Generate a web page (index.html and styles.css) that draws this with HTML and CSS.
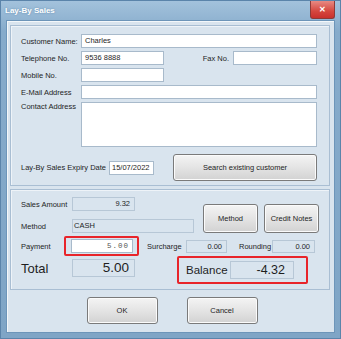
FILE: index.html
```html
<!DOCTYPE html>
<html lang="en">
<head>
    <meta charset="UTF-8">
    <title>Lay-By Sales</title>
    <link rel="stylesheet" href="styles.css">
</head>
<body>
    <div class="window">
        <div class="titlebar">
            <span class="title">Lay-By Sales</span>
            <span class="close">&#x2715;</span>
        </div>
        <div class="client">
            <div class="group customer">
                <div class="row">
                    <label>Customer Name:</label>
                    <div class="input w-full">Charles</div>
                </div>
                <div class="row">
                    <label>Telephone No.</label>
                    <div class="input w-short">9536 8888</div>
                    <label class="fax">Fax No.</label>
                    <div class="input w-fax"></div>
                </div>
                <div class="row">
                    <label>Mobile No.</label>
                    <div class="input w-short"></div>
                </div>
                <div class="row">
                    <label>E-Mail Address</label>
                    <div class="input w-full"></div>
                </div>
                <div class="row top">
                    <label>Contact Address</label>
                    <div class="input w-full area"></div>
                </div>
                <div class="row expiry">
                    <label class="expiry-label">Lay-By Sales Expiry Date</label>
                    <div class="input date">15/07/2022</div>
                    <button class="btn search">Search existing customer</button>
                </div>
            </div>

            <div class="group payment">
                <div class="upper">
                    <div class="fields">
                        <div class="row">
                            <label class="plabel">Sales Amount</label>
                            <div class="field amount">9.32</div>
                        </div>
                        <div class="row">
                            <label class="plabel">Method</label>
                            <div class="field method">CASH</div>
                        </div>
                    </div>
                    <div class="side-btns">
                        <button class="btn small">Method</button>
                        <button class="btn small">Credit Notes</button>
                    </div>
                </div>
                <div class="row pay-row">
                    <label class="plabel">Payment</label>
                    <div class="highlight pay-hl">
                        <div class="input pay">5.00</div>
                    </div>
                    <label class="surcharge">Surcharge</label>
                    <div class="field sur">0.00</div>
                    <label class="rounding">Rounding</label>
                    <div class="field rnd">0.00</div>
                </div>
                <div class="row total-row">
                    <label class="big plabel">Total</label>
                    <div class="field total">5.00</div>
                    <div class="highlight bal-hl">
                        <span class="big balance">Balance</span>
                        <div class="field bal">-4.32</div>
                    </div>
                </div>
            </div>

            <div class="actions">
                <button class="btn action">OK</button>
                <button class="btn action">Cancel</button>
            </div>
        </div>
    </div>
</body>
</html>
```

FILE: styles.css
```css
body {
    margin: 0;
    font-family: "Liberation Sans", Arial, sans-serif;
    font-size: 7.5px;
    color: #1e1e1e;
    background: #ffffff;
    white-space: nowrap;
}
.window {
    width: 341px;
    height: 339px;
    box-sizing: border-box;
    display: flex;
    flex-direction: column;
    background: linear-gradient(#a3c2dc, #86abcb 30px, #7fa5c6);
    border: 1px solid #5b84aa;
}
.titlebar {
    height: 19px;
    display: flex;
    align-items: flex-start;
    justify-content: space-between;
}
.title {
    margin: 5px 0 0 4px;
    color: #ffffff;
    font-weight: bold;
    font-size: 8px;
    text-shadow: 0 0 2px #5e87ab;
}
.close {
    width: 23px;
    height: 17px;
    margin-right: 5px;
    background: linear-gradient(#e78a83, #d5473e 60%, #c9302c);
    border: 1px solid #8d3a37;
    border-top: none;
    border-radius: 0 0 3px 3px;
    color: #ffffff;
    font-size: 8px;
    font-weight: bold;
    display: flex;
    align-items: center;
    justify-content: center;
}
.client {
    flex: 1;
    margin: 0 5px 5px 5px;
    background: #d9e4ee;
    border: 1px solid #6d95b9;
    box-shadow: inset 1px 1px 0 #f3f7fa;
    display: flex;
    flex-direction: column;
    padding: 4px 0 0 3px;
}
.group {
    width: 320px;
    box-sizing: border-box;
    border: 1px solid #a9bed3;
    box-shadow: inset 1px 1px 0 #eef3f8;
}
.customer {
    padding: 8px 0 4px 10px;
}
.payment {
    margin-top: 3px;
    padding: 7px 0 5px 10px;
}
.row {
    display: flex;
    align-items: center;
    margin-bottom: 3px;
}
.row.top {
    align-items: flex-start;
}
.row label {
    width: 60px;
    flex-shrink: 0;
}
.input {
    height: 14px;
    box-sizing: border-box;
    background: #ffffff;
    border: 1px solid #a8bacb;
    padding: 0 3px;
    line-height: 12px;
}
.w-full { width: 236px; }
.w-short { width: 83px; }
.w-fax { width: 84px; }
.area { height: 45px; }
.row label.fax {
    width: 69px;
    text-align: right;
    padding-right: 4px;
    box-sizing: border-box;
}
.expiry {
    margin-top: 7px;
    margin-bottom: 0;
}
.row label.expiry-label {
    width: 88px;
}
.date {
    width: 45px;
    padding: 0 2px;
}
.btn {
    font-family: "Liberation Sans", Arial, sans-serif;
    font-size: 7.5px;
    color: #1e1e1e;
    background: linear-gradient(#f4f4f4, #e4e4e4 50%, #d2d2d2);
    border: 1px solid #7a7a7a;
    border-radius: 3px;
    box-shadow: inset 0 0 0 1px #fbfbfb;
    padding: 0;
}
.search {
    width: 144px;
    height: 27px;
    margin-left: 19px;
}
.upper {
    display: flex;
}
.fields .row {
    margin-bottom: 8px;
}
.row label.plabel {
    width: 51px;
}
.field {
    height: 14px;
    box-sizing: border-box;
    border: 1px solid #b7c7d6;
    background: #d9e4ee;
    padding: 0 4px;
    line-height: 12px;
    text-align: right;
}
.amount { width: 63px; }
.method {
    width: 122px;
    text-align: left;
    padding-left: 1px;
}
.side-btns {
    display: flex;
    gap: 6px;
    margin: 7px 0 0 9px;
}
.btn.small {
    width: 55px;
    height: 29px;
}
.pay-row {
    margin-top: -5px;
    margin-bottom: 0;
}
.highlight {
    border: 2px solid #e8242a;
    border-radius: 2px;
}
.pay-hl {
    margin-left: -8px;
    padding: 1px 4px 1px 5px;
}
.pay {
    width: 62px;
    text-align: right;
    font-family: "Liberation Mono", "Courier New", monospace;
    color: #555555;
    letter-spacing: 1px;
}
.row label.surcharge {
    width: 39px;
    margin-left: 8px;
}
.sur {
    width: 41px;
    height: 13px;
}
.row label.rounding {
    width: 33px;
    margin-left: 12px;
}
.rnd {
    width: 43px;
    height: 13px;
}
.total-row {
    align-items: flex-start;
    margin: 0;
}
.row label.big {
    margin-top: 5px;
}
.big {
    font-size: 13px;
}
.total {
    margin-top: 3px;
    width: 63px;
    height: 18px;
    font-size: 13.5px;
    line-height: 16px;
    padding-right: 5px;
}
.bal-hl {
    margin-left: 42px;
    display: flex;
    align-items: center;
    padding: 2px 12px 3px 7px;
    height: 28px;
    box-sizing: border-box;
}
.balance {
    width: 44px;
    font-size: 11.5px;
}
.bal {
    width: 64px;
    height: 18px;
    font-size: 12.5px;
    line-height: 16px;
    padding-right: 8px;
}
.actions {
    display: flex;
    justify-content: center;
    gap: 29px;
    margin-top: 7px;
}
.btn.action {
    width: 71px;
    height: 27px;
}
```
